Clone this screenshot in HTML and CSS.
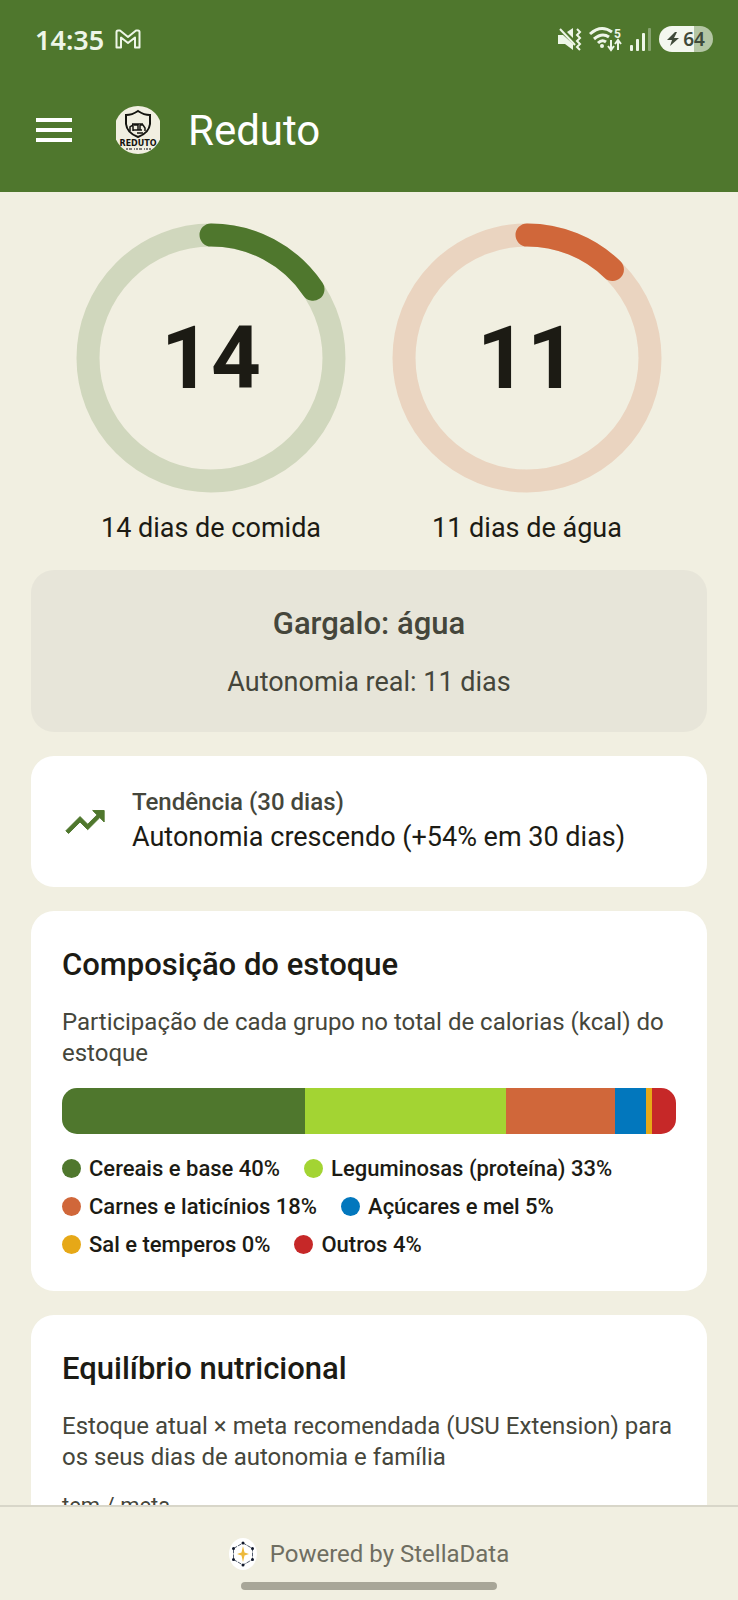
FILE: index.html
```html
<!DOCTYPE html>
<html lang="pt-BR">

<head>
    <meta charset="UTF-8">
    <meta name="viewport" content="width=device-width, initial-scale=1.0">
    <title>Reduto</title>
    <link rel="stylesheet" href="styles.css">
</head>

<body>
    <header class="header">
        <div class="status">
            <span class="time">14:35</span>
            <svg class="gmail" width="26" height="20" viewBox="0 0 26 20">
                <path d="M3 1.500H5L13 8L21 1.500H23Q24.500 1.500 24.500 3V18.500H20V8.500L13 14L6 8.500V18.500H1.500V3Q1.500 1.500 3 1.500Z" fill="none" stroke="#eef6e8" stroke-width="2" stroke-linejoin="round"/>
            </svg>
            <div class="status-icons">
                <svg width="24" height="24" viewBox="0 0 24 24" fill="#eef6e8">
                    <path d="M0 8H5L15 17V23L7 17H0ZM9 5L15 1V11Z"/>
                    <path d="M2 2L17 18" stroke="#eef6e8" stroke-width="2"/>
                    <path d="M19 2l3 3-3 3 3 3-3 3 3 3-3 3 3 3" fill="none" stroke="#eef6e8" stroke-width="2"/>
                </svg>
                <svg width="34" height="26" viewBox="0 0 34 26" fill="none" stroke="#eef6e8">
                    <path d="M1 8Q12-2 23 6M5 13Q13 6 20 11M9 17Q13 13 17 16" stroke-width="3"/>
                    <circle cx="13" cy="20" r="2" fill="#eef6e8" stroke="none"/>
                    <path d="M22 14V23M19 20l3 4 3-4M29 24V15M26 18l3-4 3 4" stroke-width="2"/>
                    <text class="wifi-num" x="25" y="12">5</text>
                </svg>
                <svg width="22" height="24" viewBox="0 0 22 24" fill="#eef6e8">
                    <rect x="0" y="18" width="3" height="6" rx="1"/>
                    <rect x="6" y="12" width="3" height="12" rx="1"/>
                    <rect x="12" y="6" width="3" height="18" rx="1"/>
                    <rect x="18" y="1" width="3" height="23" rx="1" opacity="0.35"/>
                </svg>
                <span class="battery">
                    <svg width="12" height="14" viewBox="0 0 12 14">
                        <path d="M8 0L0 8H5L3 14L12 6H7L10 0Z" fill="#3f4a3a"/>
                    </svg>
                    64
                </span>
            </div>
        </div>
        <div class="appbar">
            <button class="menu" aria-label="Menu">
                <svg width="36" height="24" viewBox="0 0 36 24" fill="#fff">
                    <rect y="0" width="36" height="4"/>
                    <rect y="10" width="36" height="4"/>
                    <rect y="20" width="36" height="4"/>
                </svg>
            </button>
            <svg class="logo" width="44" height="48" viewBox="0 0 44 48">
                <clipPath id="logo-clip">
                    <circle cx="22" cy="24" r="24"/>
                </clipPath>
                <g clip-path="url(#logo-clip)">
                    <rect width="44" height="48" fill="#f1efe1"/>
                    <path d="M22 5Q28 9 34 9V18Q33 27 22 31Q11 27 10 18V9Q16 9 22 5Z" fill="none" stroke="#14140f" stroke-width="2"/>
                    <path d="M14 25v-4l3-2v6M18 19h4v5h-3M24 19v5M24 19h3l2 3v3M16 18h11M17 24h9M21 27h6" fill="none" stroke="#14140f" stroke-width="1.500"/>
                    <text class="logo-name" x="22" y="40" text-anchor="middle">REDUTO</text>
                    <path d="M10 43H35" stroke="#555" stroke-width="1.500" stroke-dasharray="2 1 3 2 1 1"/>
                </g>
            </svg>
            <h1>Reduto</h1>
        </div>
    </header>

    <main class="content">
        <section class="rings">
            <div class="ring-item">
                <div class="ring food">
                    <svg viewBox="0 0 270 270">
                        <circle class="track" cx="135" cy="135" r="123"/>
                        <circle class="arc" cx="135" cy="135" r="123" pathLength="90" stroke-dasharray="14 90" transform="rotate(-90 135 135)"/>
                    </svg>
                    <strong>14</strong>
                </div>
                <p>14 dias de comida</p>
            </div>
            <div class="ring-item">
                <div class="ring water">
                    <svg viewBox="0 0 270 270">
                        <circle class="track" cx="135" cy="135" r="123"/>
                        <circle class="arc" cx="135" cy="135" r="123" pathLength="90" stroke-dasharray="11 90" transform="rotate(-90 135 135)"/>
                    </svg>
                    <strong>11</strong>
                </div>
                <p>11 dias de água</p>
            </div>
        </section>

        <section class="card bottleneck">
            <h2>Gargalo: água</h2>
            <p>Autonomia real: 11 dias</p>
        </section>

        <section class="card trend">
            <svg width="46" height="46" viewBox="0 0 24 24">
                <path d="M16 6l2.290 2.290-4.880 4.880-4-4L2 16.590 3.410 18l6-6 4 4 6.300-6.290L22 12V6z" fill="#4f772d" stroke="#4f772d" stroke-width="0.500"/>
            </svg>
            <div>
                <h3>Tendência (30 dias)</h3>
                <p>Autonomia crescendo (+54% em 30 dias)</p>
            </div>
        </section>

        <section class="card stack">
            <h2>Composição do estoque</h2>
            <p class="note">Participação de cada grupo no total de calorias (kcal) do estoque</p>
            <div class="bar">
                <span class="cereals" style="flex-grow: 40"></span>
                <span class="legumes" style="flex-grow: 33"></span>
                <span class="meat" style="flex-grow: 18"></span>
                <span class="sugar" style="flex-grow: 5"></span>
                <span class="salt" style="flex-grow: 1"></span>
                <span class="others" style="flex-grow: 4"></span>
            </div>
            <ul class="legend">
                <li><i class="cereals"></i>Cereais e base 40%</li>
                <li><i class="legumes"></i>Leguminosas (proteína) 33%</li>
                <li><i class="meat"></i>Carnes e laticínios 18%</li>
                <li><i class="sugar"></i>Açúcares e mel 5%</li>
                <li><i class="salt"></i>Sal e temperos 0%</li>
                <li><i class="others"></i>Outros 4%</li>
            </ul>
        </section>

        <section class="card stack">
            <h2>Equilíbrio nutricional</h2>
            <p class="note">Estoque atual × meta recomendada (USU Extension) para os seus dias de autonomia e família</p>
            <p class="unit">tem / meta</p>
        </section>
    </main>

    <footer class="footer">
        <div class="powered">
            <svg width="28" height="32" viewBox="0 0 28 32">
                <ellipse cx="14" cy="16" rx="14" ry="16" fill="#fff"/>
                <path d="M14 5L23.500 10.500V21.500L14 27L4.500 21.500V10.500Z" fill="none" stroke="#555f70" stroke-width="1" stroke-dasharray="4 1"/>
                <path d="M14 8L15.500 14.500L20 16L15.500 17.500L14 24L12.500 17.500L8 16L12.500 14.500Z" fill="#edb93c"/>
                <g fill="#10182b">
                    <circle cx="14" cy="5" r="1.500"/>
                    <circle cx="23.500" cy="10.500" r="1.500"/>
                    <circle cx="23.500" cy="21.500" r="1.500"/>
                    <circle cx="14" cy="27" r="1.500"/>
                    <circle cx="4.500" cy="21.500" r="1.500"/>
                    <circle cx="4.500" cy="10.500" r="1.500"/>
                </g>
            </svg>
            <span>Powered by StellaData</span>
        </div>
        <div class="home-bar"></div>
    </footer>
</body>

</html>
```

FILE: styles.css
```css
* {
    margin: 0;
    padding: 0;
    box-sizing: border-box;
}

body {
    height: 100vh;
    display: flex;
    flex-direction: column;
    overflow: hidden;
    background-color: #f1efe1;
    color: #1c1b14;
    font-family: Roboto, "Liberation Sans", sans-serif;
}

/* header */
.header {
    flex: none;
    background-color: #4f772d;
    color: #fff;
}

.status {
    height: 78px;
    padding: 0 25px 0 35px;
    display: flex;
    align-items: center;
    gap: 11px;
}

.time {
    font-family: "Noto Sans", sans-serif;
    font-size: 27px;
    font-weight: 600;
    color: #eef6e8;
}

.status-icons {
    margin-left: auto;
    display: flex;
    align-items: center;
    gap: 7px;
}

.wifi-num {
    font: 700 12px Roboto, sans-serif;
    fill: #eef6e8;
    stroke: none;
}

.battery {
    height: 26px;
    padding: 0 8px;
    display: flex;
    align-items: center;
    gap: 4px;
    border-radius: 13px;
    background: linear-gradient(to right, #f3f7ef 64%, #b4c6a4 64%);
    color: #3f4a3a;
    font-family: "Noto Sans", sans-serif;
    font-size: 19px;
    font-weight: 600;
}

.appbar {
    height: 114px;
    padding: 0 36px 10px;
    display: flex;
    align-items: center;
}

.menu {
    display: flex;
    border: none;
    background: none;
    cursor: pointer;
}

.logo {
    margin: 0 28px 0 44px;
}

.logo-name {
    font: 700 8px "DejaVu Sans", sans-serif;
    fill: #14140f;
}

.appbar h1 {
    font-size: 42px;
    font-weight: 400;
}

/* content */
.content {
    flex: 1;
    min-height: 0;
    overflow: hidden;
    padding: 31px 31px 0;
}

.rings {
    display: flex;
    justify-content: center;
    gap: 46px;
    margin-bottom: 23px;
}

.ring-item {
    text-align: center;
}

.ring {
    width: 270px;
    display: grid;
    place-items: center;
}

.ring svg,
.ring strong {
    grid-area: 1 / 1;
}

.ring svg {
    width: 100%;
}

.ring circle {
    fill: none;
    stroke-width: 23;
}

.food {
    color: #4f772d;
}

.water {
    color: #d0673a;
}

.track {
    stroke: currentColor;
    opacity: 0.2;
}

.arc {
    stroke: currentColor;
    stroke-linecap: round;
}

.ring strong {
    color: #1c1b14;
    font-size: 87px;
    font-weight: 700;
}

.ring-item p {
    margin-top: 16px;
    font-size: 27px;
    line-height: 38px;
}

.card {
    margin-bottom: 24px;
    padding: 31px;
    border-radius: 23px;
    background-color: #fff;
}

.card h2 {
    font-size: 31px;
    font-weight: 500;
    line-height: 46px;
}

.bottleneck {
    background-color: #e7e5d9;
    color: #45463b;
    text-align: center;
}

.bottleneck p {
    margin-top: 16px;
    font-size: 27px;
    line-height: 38px;
}

.trend {
    display: flex;
    align-items: center;
    gap: 24px;
}

.trend h3 {
    color: #45463b;
    font-size: 24px;
    font-weight: 500;
    line-height: 31px;
}

.trend p {
    font-size: 27px;
    line-height: 38px;
}

.stack {
    display: flex;
    flex-direction: column;
    gap: 19px;
}

.note,
.unit {
    color: #45463b;
    font-size: 24px;
    line-height: 31px;
}

.unit {
    font-size: 22px;
    line-height: 27px;
}

.bar {
    height: 46px;
    display: flex;
    border-radius: 15px;
    overflow: hidden;
}

.legend {
    display: flex;
    flex-wrap: wrap;
    gap: 7px 24px;
    list-style: none;
}

.legend li {
    display: flex;
    align-items: center;
    gap: 8px;
    font-size: 22px;
    font-weight: 500;
    line-height: 31px;
}

.legend i {
    width: 19px;
    height: 19px;
    border-radius: 50%;
}

.cereals {
    background-color: #4f772d;
}

.legumes {
    background-color: #a3d433;
}

.meat {
    background-color: #d0673a;
}

.sugar {
    background-color: #0277bd;
}

.salt {
    background-color: #e6a817;
}

.others {
    background-color: #c62828;
}

/* footer */
.footer {
    flex: none;
    border-top: 2px solid #d8d6c9;
    padding: 31px 31px 10px;
}

.powered {
    display: flex;
    justify-content: center;
    align-items: center;
    gap: 13px;
    color: #6f6e61;
    font-size: 24px;
    line-height: 31px;
}

.home-bar {
    width: 38%;
    height: 8px;
    margin: 12px auto 0;
    border-radius: 4px;
    background-color: #a8a698;
}
```
